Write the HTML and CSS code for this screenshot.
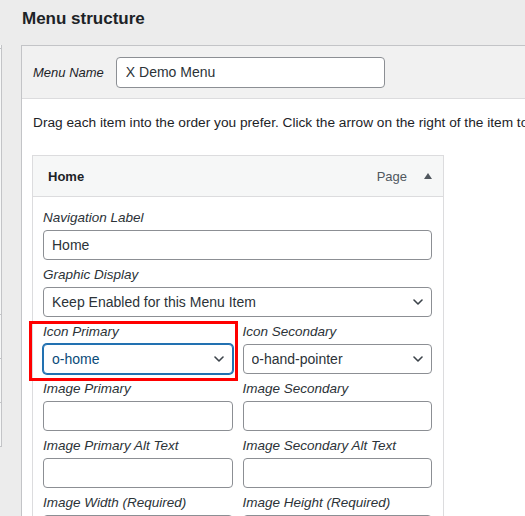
FILE: index.html
```html
<!doctype html>
<html lang="en">
  <head>
    <meta charset="UTF-8" />
    <meta name="viewport" content="width=device-width, initial-scale=1.0" />
    <title>Menus</title>
    <link rel="stylesheet" href="styles.css">
  </head>
  <body>
    <div class="nav-menus">
      <!-- left column: add-items accordion, mostly scrolled out of view -->
      <div class="menu-sidebar">
        <div class="side-section first"></div>
        <div class="side-section tall"></div>
        <div class="side-section"></div>
        <div class="side-section"></div>
        <div class="side-section"></div>
      </div>

      <div class="menu-structure">
        <h2 class="structure-title">Menu structure</h2>

        <div class="menu-edit">
          <div class="menu-header">
            <label for="menuName" class="menu-name-label">Menu Name</label>
            <input type="text" id="menuName" class="menu-name" value="X Demo Menu" />
          </div>

          <div class="menu-body">
            <p class="drag-hint">Drag each item into the order you prefer. Click the arrow on the right of the item to reveal additional configuration options.</p>

            <div class="menu-item">
              <div class="item-bar">
                <span class="item-title">Home</span>
                <span class="item-type">Page</span>
                <span class="item-toggle"></span>
              </div>

              <div class="item-settings">
                <div class="field">
                  <label for="navLabel">Navigation Label</label>
                  <input type="text" id="navLabel" value="Home" />
                </div>

                <div class="field">
                  <label for="graphicDisplay">Graphic Display</label>
                  <div class="select-wrap">
                    <select id="graphicDisplay">
                      <option>Keep Enabled for this Menu Item</option>
                    </select>
                    <svg class="chevron" width="10" height="6" viewBox="0 0 10 6"><path d="M1 1 L5 5 L9 1" /></svg>
                  </div>
                </div>

                <div class="field-row">
                  <div class="field highlight">
                    <label for="iconPrimary">Icon Primary</label>
                    <div class="select-wrap">
                      <select id="iconPrimary" class="is-focused">
                        <option>o-home</option>
                      </select>
                      <svg class="chevron" width="10" height="6" viewBox="0 0 10 6"><path d="M1 1 L5 5 L9 1" /></svg>
                    </div>
                  </div>
                  <div class="field">
                    <label for="iconSecondary">Icon Secondary</label>
                    <div class="select-wrap">
                      <select id="iconSecondary">
                        <option>o-hand-pointer</option>
                      </select>
                      <svg class="chevron" width="10" height="6" viewBox="0 0 10 6"><path d="M1 1 L5 5 L9 1" /></svg>
                    </div>
                  </div>
                </div>

                <div class="field-row">
                  <div class="field">
                    <label for="imagePrimary">Image Primary</label>
                    <input type="text" id="imagePrimary" />
                  </div>
                  <div class="field">
                    <label for="imageSecondary">Image Secondary</label>
                    <input type="text" id="imageSecondary" />
                  </div>
                </div>

                <div class="field-row">
                  <div class="field">
                    <label for="imagePrimaryAlt">Image Primary Alt Text</label>
                    <input type="text" id="imagePrimaryAlt" />
                  </div>
                  <div class="field">
                    <label for="imageSecondaryAlt">Image Secondary Alt Text</label>
                    <input type="text" id="imageSecondaryAlt" />
                  </div>
                </div>

                <div class="field-row">
                  <div class="field">
                    <label for="imageWidth">Image Width (Required)</label>
                    <input type="text" id="imageWidth" />
                  </div>
                  <div class="field">
                    <label for="imageHeight">Image Height (Required)</label>
                    <input type="text" id="imageHeight" />
                  </div>
                </div>
              </div>
            </div>
          </div>
        </div>
      </div>
    </div>
  </body>
</html>
```

FILE: styles.css
```css
html,
body {
  margin: 0;
  padding: 0;
  height: 100%;
  overflow: hidden;
}

body {
  font-family: "Liberation Sans", Arial, sans-serif;
  font-size: 13px;
  color: #1d2327;
  background-color: #ececec;
}

.nav-menus {
  display: flex;
  align-items: flex-start;
}

/* left column */
.menu-sidebar {
  width: 1px;
  margin-top: 45px;
  margin-right: 19px;
  background-color: #f6f7f7;
  border-right: 1px solid #c3c4c7;
  flex-shrink: 0;
}

.side-section {
  height: 43px;
  border-bottom: 1px solid #c3c4c7;
}

.side-section.first {
  height: 3px;
}

.side-section.tall {
  height: 265px;
}

/* menu structure column */
.menu-structure {
  flex-shrink: 0;
  width: 620px;
}

.structure-title {
  margin: 0;
  padding: 8px 0 0 1px;
  height: 45px;
  box-sizing: border-box;
  font-size: 17px;
  font-weight: bold;
  line-height: 22px;
  color: #1d2327;
}

.menu-edit {
  border: 1px solid #c3c4c7;
  background-color: #fff;
}

.menu-header {
  display: flex;
  align-items: center;
  height: 52px;
  padding: 0 11px;
  background-color: #f1f1f1;
  border-bottom: 1px solid #dcdcde;
}

.menu-name-label {
  font-style: italic;
  color: #1d2327;
  margin-right: 12px;
}

.menu-name {
  width: 269px;
  height: 31px;
  box-sizing: border-box;
  padding: 0 9px;
  font-family: inherit;
  font-size: 14px;
  color: #2c3338;
  border: 1px solid #8c8f94;
  border-radius: 4px;
  background-color: #fff;
}

.menu-body {
  padding: 0 0 0 10px;
}

.drag-hint {
  margin: 15px 0 0 1px;
  font-size: 13.7px;
  line-height: 18px;
  white-space: nowrap;
  color: #1d2327;
}

/* a single menu item */
.menu-item {
  width: 410px;
  margin-top: 23px;
  border: 1px solid #dcdcde;
}

.item-bar {
  display: flex;
  align-items: center;
  height: 40px;
  padding: 0 11px 0 15px;
  background-color: #f6f7f7;
  border-bottom: 1px solid #dcdcde;
}

.item-title {
  flex: 1;
  font-weight: bold;
  font-size: 13px;
}

.item-type {
  color: #50575e;
  margin-right: 17px;
}

.item-toggle {
  width: 0;
  height: 0;
  border-left: 4px solid transparent;
  border-right: 4px solid transparent;
  border-bottom: 6px solid #50575e;
}

.item-settings {
  padding: 12px 11px 10px 10px;
}

.field {
  position: relative;
  margin-bottom: 6px;
}

.field label {
  display: block;
  font-style: italic;
  font-size: 13.5px;
  line-height: 18px;
  margin-bottom: 3px;
  color: #2c3338;
}

.field-row {
  display: grid;
  grid-template-columns: 1fr 1fr;
  column-gap: 10px;
}

.field input,
.field select {
  display: block;
  width: 100%;
  height: 30px;
  box-sizing: border-box;
  margin: 0;
  padding: 0 8px;
  font-family: inherit;
  font-size: 14px;
  color: #2c3338;
  background-color: #fff;
  border: 1px solid #8c8f94;
  border-radius: 4px;
}

.field select {
  appearance: none;
  -webkit-appearance: none;
  padding-right: 24px;
}

.field select.is-focused {
  border-color: #2271b1;
  box-shadow: 0 0 0 1px #2271b1;
  color: #0a4b78;
}

.select-wrap {
  position: relative;
}

.chevron {
  position: absolute;
  right: 9px;
  top: 12px;
  pointer-events: none;
}

.chevron path {
  fill: none;
  stroke: #3c434a;
  stroke-width: 1.6;
  stroke-linecap: round;
  stroke-linejoin: round;
}

/* red callout around a field */
.highlight::after {
  content: "";
  position: absolute;
  left: -14px;
  top: -2px;
  right: -5px;
  bottom: -7px;
  border: 3px solid #ff0000;
  pointer-events: none;
}
```
